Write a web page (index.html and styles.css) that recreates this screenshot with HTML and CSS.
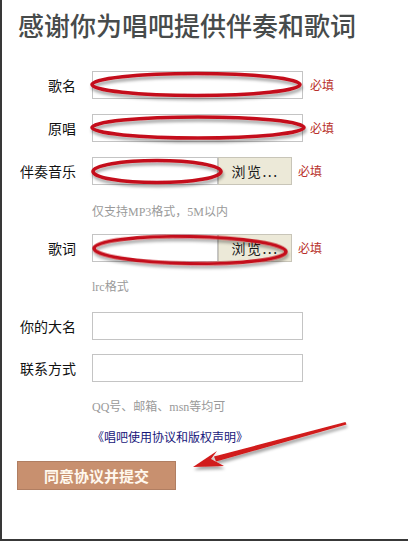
FILE: index.html
```html
<!DOCTYPE html>
<html lang="zh-CN">
<head>
<meta charset="utf-8">
<title>感谢你为唱吧提供伴奏和歌词</title>
<link rel="stylesheet" href="styles.css">
</head>
<body>
<div class="page">
  <h1 class="title">感谢你为唱吧提供伴奏和歌词</h1>
  <form class="form">
    <div class="row">
      <label class="lbl">歌名</label>
      <input class="text" type="text">
      <span class="req">必填</span>
    </div>
    <div class="row row-gap">
      <label class="lbl">原唱</label>
      <input class="text" type="text">
      <span class="req">必填</span>
    </div>
    <div class="row row-gap">
      <label class="lbl">伴奏音乐</label>
      <span class="file"><span class="file-box"></span><span class="browse">浏览...</span></span>
      <span class="req req-file">必填</span>
    </div>
    <p class="hint hint-1">仅支持MP3格式，5M以内</p>
    <div class="row row-after-hint1">
      <label class="lbl">歌词</label>
      <span class="file"><span class="file-box"></span><span class="browse">浏览...</span></span>
      <span class="req req-file">必填</span>
    </div>
    <p class="hint hint-2">lrc格式</p>
    <div class="row row-after-hint2">
      <label class="lbl">你的大名</label>
      <input class="text" type="text">
    </div>
    <div class="row row-gap2">
      <label class="lbl">联系方式</label>
      <input class="text" type="text">
    </div>
    <p class="hint hint-3">QQ号、邮箱、msn等均可</p>
    <a class="agree-link" href="#">《唱吧使用协议和版权声明》</a>
    <button class="submit" type="button">同意协议并提交</button>
  </form>
  <svg class="marks" width="408" height="541" viewBox="0 0 408 541" xmlns="http://www.w3.org/2000/svg">
    <defs>
      <filter id="sh" x="-10%" y="-60%" width="120%" height="220%">
        <feGaussianBlur in="SourceAlpha" stdDeviation="1.6"/>
        <feOffset dx="1" dy="2.5" result="b"/>
        <feFlood flood-color="#000" flood-opacity="0.35"/>
        <feComposite in2="b" operator="in"/>
        <feMerge><feMergeNode/><feMergeNode in="SourceGraphic"/></feMerge>
      </filter>
    </defs>
    <g fill="none" stroke="#c4111a" stroke-width="3.6" filter="url(#sh)">
      <ellipse cx="196" cy="84.5" rx="104" ry="11"/>
      <ellipse cx="198" cy="127.5" rx="106" ry="10.5"/>
      <ellipse cx="157" cy="171.5" rx="64" ry="11"/>
      <ellipse cx="190" cy="250" rx="96" ry="13.5" transform="rotate(1 190 250)"/>
    </g>
    <g fill="#d11a1a" filter="url(#sh)">
      <polygon points="345.5,422 346.5,424.5 216,461.5 214,456.5"/>
      <polygon points="193,467 217,451 211,459 224,466"/>
    </g>
  </svg>
</div>
</body>
</html>
```

FILE: styles.css
```css
html, body {
  margin: 0;
  padding: 0;
  background: #ffffff;
}

.page {
  position: relative;
  width: 408px;
  height: 541px;
  box-sizing: border-box;
  border-left: 2px solid #383838;
  border-bottom: 2px solid #383838;
  background: #ffffff;
  font-family: "Noto Sans CJK SC", "Liberation Sans", sans-serif;
  color: #1a1a1a;
}

.title {
  margin: 0;
  padding: 10px 0 0 16px;
  font-size: 26px;
  line-height: 30px;
  font-weight: 500;
  color: #474b4b;
  letter-spacing: 0;
}

.form {
  display: flex;
  flex-direction: column;
  align-items: flex-start;
  margin: 31px 0 0 0;
}

.row {
  display: flex;
  align-items: center;
  height: 28px;
}

.row-gap { margin-top: 15px; }
.row-gap2 { margin-top: 14px; }
.row-after-hint1 { margin-top: 12px; }
.row-after-hint2 { margin-top: 15px; }

.lbl {
  width: 74px;
  margin-right: 16px;
  text-align: right;
  font-size: 14px;
  line-height: 20px;
  color: #111111;
}

.text {
  width: 211px;
  height: 28px;
  box-sizing: border-box;
  margin: 0;
  padding: 0 4px;
  border: 1px solid #c4c4c4;
  background: #ffffff;
  outline: none;
}

.req {
  margin-left: 7px;
  font-size: 12px;
  line-height: 16px;
  color: #b8302a;
}

.req-file { margin-left: 6px; }

.file {
  display: flex;
  height: 28px;
}

.file-box {
  width: 126px;
  height: 28px;
  box-sizing: border-box;
  border: 1px solid #c4c4c4;
  background: #ffffff;
}

.browse {
  display: flex;
  align-items: center;
  justify-content: center;
  width: 74px;
  height: 28px;
  box-sizing: border-box;
  border: 1px solid #c8c5b8;
  background: #ece9d8;
  font-size: 14px;
  color: #1a1a1a;
  letter-spacing: 1.5px;
}

.hint {
  margin: 0 0 0 90px;
  font-family: "Liberation Serif", "Noto Sans CJK SC", serif;
  font-size: 12px;
  line-height: 20px;
  color: #9a9a9a;
}

.hint-1 { margin-top: 17px; }
.hint-2 { margin-top: 15px; }
.hint-3 { margin-top: 15px; }

.agree-link {
  margin: 10px 0 0 90px;
  font-size: 12px;
  line-height: 20px;
  color: #16167a;
  text-decoration: none;
}

.submit {
  margin: 14px 0 0 15px;
  width: 159px;
  height: 29px;
  padding: 0;
  border: 1px solid #b07e62;
  background: #c8906f;
  color: #fff8ee;
  font-family: "Noto Sans CJK SC", sans-serif;
  font-size: 15px;
  font-weight: 700;
  letter-spacing: 0;
}

.marks {
  position: absolute;
  left: -2px;
  top: 0;
  pointer-events: none;
}
```
